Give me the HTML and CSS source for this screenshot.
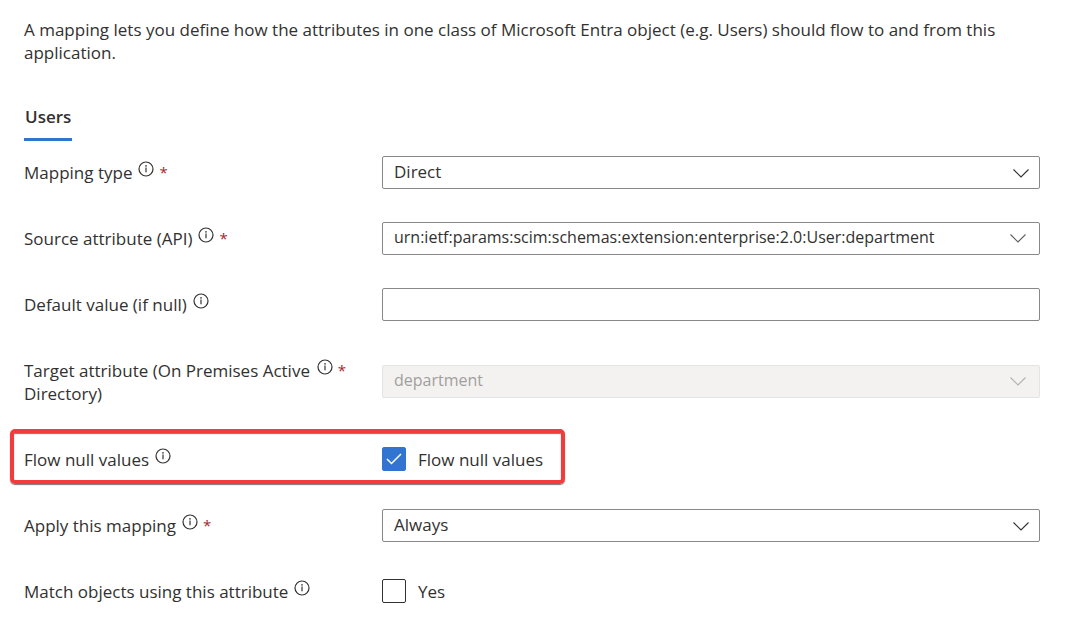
FILE: index.html
```html
<!DOCTYPE html>
<html lang="en">
<head>
  <meta charset="UTF-8">
  <meta name="viewport" content="width=device-width, initial-scale=1">
  <title>Attribute mapping</title>
  <link rel="stylesheet" href="styles.css">
</head>
<body>
  <!-- shared icons -->
  <svg class="sprite" aria-hidden="true">
    <symbol id="icon-info" viewBox="0 0 16 16">
      <circle cx="8" cy="8" r="7" fill="none" stroke="currentColor" stroke-width="1.2"/>
      <path d="M8 6.6V11.2" fill="none" stroke="currentColor" stroke-width="1.2"/>
      <circle cx="8" cy="4.9" r="0.8" fill="currentColor"/>
    </symbol>
    <symbol id="icon-chevron" viewBox="0 0 16 9">
      <path d="M0.5 0.5L8 8L15.5 0.5" fill="none" stroke="currentColor" stroke-width="1.1"/>
    </symbol>
  </svg>

  <p class="intro">A mapping lets you define how the attributes in one class of Microsoft Entra object (e.g. Users) should flow to and from this application.</p>

  <div class="tabs" role="tablist">
    <button type="button" class="tab" role="tab" aria-selected="true">Users</button>
  </div>

  <form class="mapping-form">
    <div class="row">
      <label class="label" for="mapping-type">
        <span>Mapping type</span>
        <svg class="info"><use href="#icon-info"/></svg>
        <span class="required">*</span>
      </label>
      <div class="field">
        <select id="mapping-type" class="control">
          <option>Direct</option>
        </select>
        <svg class="chevron"><use href="#icon-chevron"/></svg>
      </div>
    </div>

    <div class="row">
      <label class="label" for="source-attribute">
        <span>Source attribute (API)</span>
        <svg class="info"><use href="#icon-info"/></svg>
        <span class="required">*</span>
      </label>
      <div class="field combo">
        <select id="source-attribute" class="control">
          <option>urn:ietf:params:scim:schemas:extension:enterprise:2.0:User:department</option>
        </select>
        <svg class="chevron"><use href="#icon-chevron"/></svg>
      </div>
    </div>

    <div class="row">
      <label class="label" for="default-value">
        <span>Default value (if null)</span>
        <svg class="info"><use href="#icon-info"/></svg>
      </label>
      <div class="field">
        <input type="text" id="default-value" class="control">
      </div>
    </div>

    <div class="row">
      <label class="label" for="target-attribute">
        <span>Target attribute (On Premises Active Directory)</span>
        <svg class="info"><use href="#icon-info"/></svg>
        <span class="required">*</span>
      </label>
      <div class="field combo">
        <select id="target-attribute" class="control" disabled>
          <option>department</option>
        </select>
        <svg class="chevron"><use href="#icon-chevron"/></svg>
      </div>
    </div>

    <div class="row highlight">
      <label class="label" for="flow-null">
        <span>Flow null values</span>
        <svg class="info"><use href="#icon-info"/></svg>
      </label>
      <label class="check">
        <input type="checkbox" id="flow-null" checked>
        <svg class="tick" viewBox="0 0 16 12"><path d="M1 6L5.5 10.5L15 1" fill="none" stroke="currentColor" stroke-width="1.5"/></svg>
        <span>Flow null values</span>
      </label>
    </div>

    <div class="row">
      <label class="label" for="apply-mapping">
        <span>Apply this mapping</span>
        <svg class="info"><use href="#icon-info"/></svg>
        <span class="required">*</span>
      </label>
      <div class="field">
        <select id="apply-mapping" class="control">
          <option>Always</option>
        </select>
        <svg class="chevron"><use href="#icon-chevron"/></svg>
      </div>
    </div>

    <div class="row">
      <label class="label" for="match-objects">
        <span>Match objects using this attribute</span>
        <svg class="info"><use href="#icon-info"/></svg>
      </label>
      <label class="check">
        <input type="checkbox" id="match-objects">
        <span>Yes</span>
      </label>
    </div>
  </form>
</body>
</html>
```
FILE: styles.css
```css
*,
*::before {
  box-sizing: border-box;
}
body {
  margin: 0;
  padding: 18px 43px 18px 24px;
  background: #fff;
  color: #323130;
  font-family: "Segoe UI", "Open Sans", "Noto Sans", sans-serif;
  font-size: 17px;
  line-height: 23px;
}
.sprite {
  display: none;
}
.intro {
  margin: 0 0 40px;
}
.tabs {
  display: flex;
  margin-bottom: 14px;
}
.tab {
  padding: 1px 1px 10px;
  border: none;
  border-bottom: 3px solid #3275d0;
  background: none;
  color: inherit;
  font: inherit;
  font-weight: 600;
  cursor: pointer;
}
.mapping-form {
  display: flex;
  flex-direction: column;
  gap: 32px;
}
.row {
  display: grid;
  grid-template-columns: 358px 1fr;
  align-items: center;
}
.label {
  display: flex;
  align-items: flex-start;
  max-width: 322px;
  padding: 6px 0 5px;
}
.info {
  flex: none;
  width: 16px;
  height: 16px;
  margin-left: 6px;
}
.required {
  margin-left: 5px;
  color: #a4262c;
  font-size: 15px;
}
.field {
  position: relative;
}
.control {
  display: block;
  width: 100%;
  height: 33px;
  padding: 0 40px 2px 11px;
  border: 1px solid #8a8886;
  border-radius: 2px;
  background: #fff;
  color: inherit;
  font: inherit;
  appearance: none;
}
.combo .control {
  font-size: 16px;
}
.control:disabled {
  border-color: #e5e4e3;
  background: #f3f2f1;
  color: #a19f9d;
  opacity: 1;
}
.chevron {
  position: absolute;
  top: 13px;
  right: 11px;
  width: 16px;
  height: 9px;
  pointer-events: none;
}
.combo .chevron {
  top: 12px;
  right: 14px;
  color: #605e5c;
}
.combo .control:disabled + .chevron {
  color: #b3b1af;
}
.check {
  display: flex;
  align-items: center;
  gap: 12px;
  position: relative;
  justify-self: start;
}
.check input {
  width: 24px;
  height: 24px;
  margin: 0;
  border: 1px solid #323130;
  border-radius: 2px;
  background: #fff;
  appearance: none;
}
.check input:checked {
  border-color: #3275d0;
  background: #3275d0;
}
.tick {
  position: absolute;
  left: 4px;
  width: 16px;
  height: 12px;
  color: #fff;
  pointer-events: none;
}
.highlight {
  position: relative;
}
/* callout frame drawn around the row */
.highlight::before {
  content: "";
  position: absolute;
  top: -13px;
  bottom: -8px;
  left: -14px;
  width: 555px;
  border: 4px solid #f23b3b;
  border-radius: 5px;
  box-shadow: 0 1px 1px #777, inset 0 1px 1px #777;
  pointer-events: none;
}
```
